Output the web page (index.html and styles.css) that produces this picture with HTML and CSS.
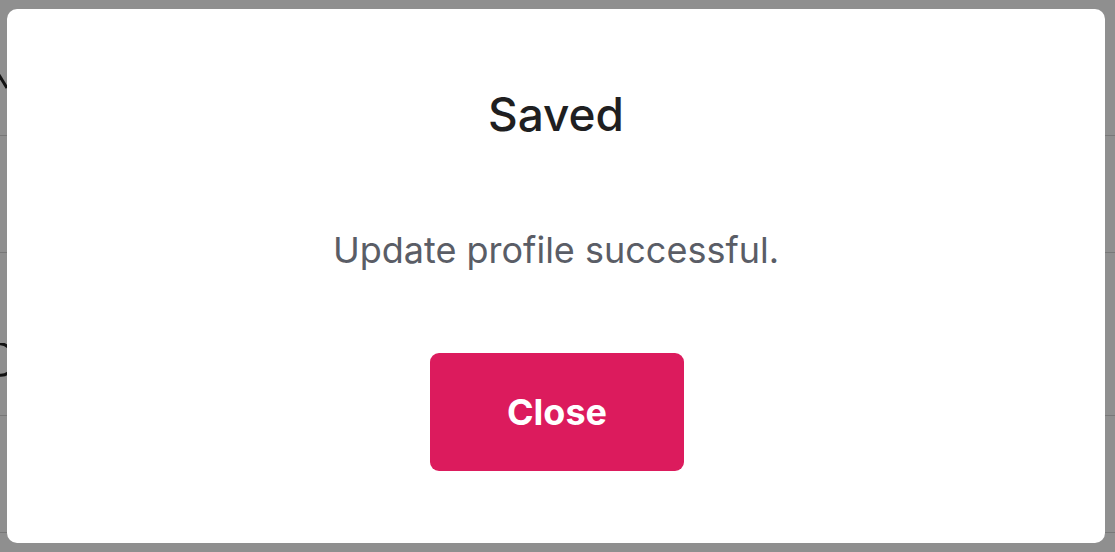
FILE: index.html
```html
<!DOCTYPE html>
<html>
<head>
<meta charset="utf-8">
<link rel="stylesheet" href="styles.css">
</head>
<body>
<div class="page">
  <div class="row r1"><svg class="glyph g1" width="20" height="40" viewBox="0 0 20 40"><path d="M-4 4 L7 22" stroke="#222" stroke-width="3" fill="none"/></svg></div>
  <div class="row r2"></div>
  <div class="row r3"><svg class="glyph g2" width="20" height="50" viewBox="0 0 20 50"><path d="M-2 1 Q4 0 8 4 M8 30 Q4 33 -2 32" stroke="#222" stroke-width="3" fill="none"/></svg></div>
  <div class="row r4"></div>
  <div class="row r5"></div>
</div>
<div class="overlay"></div>
<div class="modal">
  <h1 class="title">Saved</h1>
  <p class="message">Update profile successful.</p>
  <button class="close-btn">Close</button>
</div>
</body>
</html>
```

FILE: styles.css
```css
html, body {
  margin: 0;
  padding: 0;
  width: 1115px;
  height: 552px;
  overflow: hidden;
  background: #fff;
  font-family: Inter, "Noto Sans", sans-serif;
}
.page {
  display: flex;
  flex-direction: column;
}
.row {
  border-bottom: 1px solid #d6d6d6;
  position: relative;
}
.r1 { height: 135px; }
.r2 { height: 116px; }
.r3 { height: 162px; }
.r4 { height: 116px; }
.r5 { height: 40px; border-bottom: none; }
.glyph { position: absolute; left: 0; }
.g1 { top: 66px; }
.g2 { top: 90px; }
.overlay {
  position: absolute;
  inset: 0;
  background: rgba(0, 0, 0, 0.44);
}
.modal {
  position: absolute;
  left: 7px;
  top: 9px;
  width: 1098px;
  height: 534px;
  box-sizing: border-box;
  background: #fff;
  border-radius: 10px;
  display: flex;
  flex-direction: column;
  align-items: center;
  padding-top: 81px;
}
.title {
  margin: 0;
  font-size: 46px;
  line-height: 48px;
  font-weight: 500;
  color: #1f1f21;
}
.message {
  margin: 92px 0 0;
  font-size: 36px;
  line-height: 40px;
  color: #5a5d66;
}
.close-btn {
  margin-top: 83px;
  margin-left: 2px;
  width: 254px;
  height: 118px;
  border: none;
  border-radius: 9px;
  background: #dc1b5d;
  color: #fff;
  font-family: Inter, "Noto Sans", sans-serif;
  font-size: 36px;
  font-weight: 700;
  padding: 0;
}
```
